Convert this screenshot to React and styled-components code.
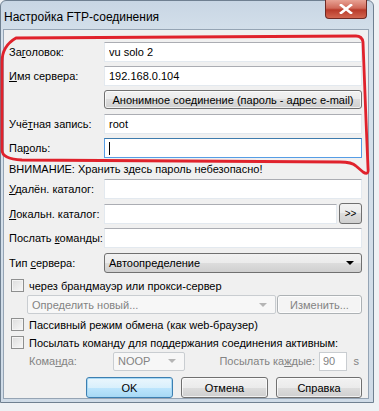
import React from "react";
import styled, { createGlobalStyle } from "styled-components";

const GlobalStyle = createGlobalStyle`
  html, body {
    margin: 0;
    padding: 0;
    background: #eef1f4;
  }
  body {
    font-family: "Liberation Sans", Arial, sans-serif;
    font-size: 11px;
    color: #000;
  }
`;

export default function App() {
  return (
    <>
      <GlobalStyle />
      <Window>
        <TitleBar>
          <Title>Настройка FTP-соединения</Title>
          <CloseBtn>
            <svg width="14" height="10" viewBox="0 0 14 10">
              <path
                d="M2 1 L12 9 M12 1 L2 9"
                stroke="#fff"
                strokeWidth="2.6"
                strokeLinecap="square"
              />
            </svg>
          </CloseBtn>
        </TitleBar>
        <Client>
          <Row>
            <Label>
              За<u>г</u>оловок:
            </Label>
            <Input defaultValue="vu solo 2" />
          </Row>
          <Row $mt={4}>
            <Label>
              <u>И</u>мя сервера:
            </Label>
            <Input defaultValue="192.168.0.104" />
          </Row>
          <Row $mt={4}>
            <span />
            <Button $h={19}>Анонимное соединение (пароль - адрес e-mail)</Button>
          </Row>
          <Row $mt={5}>
            <Label>
              Учё<u>т</u>ная запись:
            </Label>
            <Input defaultValue="root" />
          </Row>
          <Row $mt={4}>
            <Label>
              Па<u>р</u>оль:
            </Label>
            <Input $focus>
              <Caret />
            </Input>
          </Row>
          <Warning>ВНИМАНИЕ: Хранить здесь пароль небезопасно!</Warning>
          <Row $mt={2}>
            <Label>
              <u>У</u>далён. каталог:
            </Label>
            <Input />
          </Row>
          <Row $mt={4}>
            <Label>
              <u>Л</u>окальн. каталог:
            </Label>
            <InputWithBtn>
              <Input />
              <SmallBtn>&gt;&gt;</SmallBtn>
            </InputWithBtn>
          </Row>
          <Row $mt={4}>
            <Label>
              Послать <u>к</u>оманды:
            </Label>
            <Input />
          </Row>
          <Row $mt={5}>
            <Label>
              Тип <u>с</u>ервера:
            </Label>
            <DropButton>
              <span>Автоопределение</span>
              <Arrow />
            </DropButton>
          </Row>
          <CheckRow $mt={5}>
            <Box />
            <span>через брандмауэр или прокси-сервер</span>
          </CheckRow>
          <ProxyRow>
            <DisabledSelect $w={249}>
              <span>Определить новый...</span>
              <Arrow $disabled />
            </DisabledSelect>
            <Button $h={19} $disabled>
              Изменить...
            </Button>
          </ProxyRow>
          <CheckRow $mt={3}>
            <Box />
            <span>Пассивный режим обмена (как web-браузер)</span>
          </CheckRow>
          <CheckRow $mt={3}>
            <Box />
            <span>Посылать команду для поддержания соединения активным:</span>
          </CheckRow>
          <KeepRow>
            <Dim $w={84}>
              Кома<u>н</u>да:
            </Dim>
            <DisabledSelect $w={72}>
              <span>NOOP</span>
              <Arrow $disabled />
            </DisabledSelect>
            <Dim $w={134} $right>
              Посылать ка<u>ж</u>дые:
            </Dim>
            <SmallInput>90</SmallInput>
            <Dim $w={16} $right>
              s
            </Dim>
          </KeepRow>
          <Footer>
            <Button $h={21} $w={87} $default>
              OK
            </Button>
            <Button $h={21} $w={87}>
              Отмена
            </Button>
            <Button $h={21} $w={86}>
              Справка
            </Button>
          </Footer>
          <Scribble viewBox="0 0 379 411" width="379" height="411">
            <path
              d="M16 38 L356 36 Q362 36 363 42 L366 120 L368 168 Q369 176 363 172 L356 166 Q352 162 340 162 L22 160 Q2 159 2 150 L2 62 Q2 46 16 38 Z"
              fill="none"
              stroke="#e0222c"
              strokeWidth="2.8"
              strokeLinejoin="round"
            />
          </Scribble>
        </Client>
      </Window>
    </>
  );
}

const Window = styled.div`
  position: relative;
  width: 374px;
  height: 403px;
  background: linear-gradient(#c8d6e4, #d7e2ec 40px, #cfdbe7);
  border: 1px solid #6f8091;
  border-radius: 6px 6px 0 0;
  box-sizing: border-box;
  display: flex;
  flex-direction: column;
  padding: 0 4px 3px 2px;
`;

const TitleBar = styled.div`
  height: 29px;
  display: flex;
  align-items: flex-start;
  justify-content: space-between;
`;

const Title = styled.div`
  font-size: 12px;
  padding: 9px 0 0 1px;
  color: #000;
`;

const CloseBtn = styled.div`
  width: 42px;
  height: 19px;
  margin-top: -1px;
  margin-right: 2px;
  box-sizing: border-box;
  border: 1px solid #6e2a24;
  border-top: none;
  border-radius: 0 0 4px 4px;
  background: linear-gradient(#e8a294, #d06a5a 45%, #b83a2a 55%, #d26650);
  display: flex;
  align-items: center;
  justify-content: center;
`;

const Client = styled.div`
  flex: 1;
  background: #f0f0f0;
  border: 1px solid #95a4b4;
  padding: 12px 6px 0 5px;
  display: flex;
  flex-direction: column;
`;

const Row = styled.div`
  display: grid;
  grid-template-columns: 95px minmax(0, 1fr);
  align-items: center;
  margin-top: ${(p) => p.$mt || 0}px;
`;

const Label = styled.div`
  white-space: nowrap;
`;

const Input = styled.input.attrs((p) => ({ as: p.children ? "div" : "input" }))`
  height: 20px;
  box-sizing: border-box;
  width: 100%;
  min-width: 0;
  border: 1px solid ${(p) => (p.$focus ? "#569de5" : "#e3e9ef")};
  border-top-color: ${(p) => (p.$focus ? "#3d7bad" : "#abadb3")};
  background: #fff;
  font: inherit;
  padding: 0 4px;
  outline: none;
  display: flex;
  align-items: center;
`;

const Caret = styled.span`
  width: 1px;
  height: 13px;
  background: #000;
`;

const Button = styled.div`
  height: ${(p) => p.$h}px;
  ${(p) => (p.$w ? `width: ${p.$w}px;` : "")}
  box-sizing: border-box;
  border: 1px solid ${(p) => (p.$default ? "#3c7fb1" : p.$disabled ? "#adb2b5" : "#707070")};
  border-radius: 3px;
  background: ${(p) =>
    p.$default
      ? "linear-gradient(#eaf6fd, #d9f0fc 50%, #bee6fd 50%, #a7d9f5)"
      : p.$disabled
      ? "#f4f4f4"
      : "linear-gradient(#f2f2f2, #ebebeb 50%, #dddddd 50%, #cfcfcf)"};
  box-shadow: inset 0 0 0 1px ${(p) => (p.$default ? "#a8d8f4" : "rgba(255,255,255,0.7)")};
  color: ${(p) => (p.$disabled ? "#838383" : "#000")};
  display: flex;
  align-items: center;
  justify-content: center;
  white-space: nowrap;
`;

const Warning = styled.div`
  height: 16px;
  margin-top: 3px;
  display: flex;
  align-items: center;
`;

const InputWithBtn = styled.div`
  display: flex;
  align-items: center;
  gap: 2px;
`;

const SmallBtn = styled.div`
  width: 23px;
  height: 21px;
  flex: none;
  box-sizing: border-box;
  border: 1px solid #707070;
  border-radius: 3px;
  background: linear-gradient(#f2f2f2, #ebebeb 50%, #dddddd 50%, #cfcfcf);
  font-size: 10px;
  display: flex;
  align-items: center;
  justify-content: center;
`;

const DropButton = styled.div`
  height: 20px;
  box-sizing: border-box;
  border: 1px solid #707070;
  border-radius: 3px;
  background: linear-gradient(#f2f2f2, #ebebeb 50%, #dddddd 50%, #cfcfcf);
  display: flex;
  align-items: center;
  justify-content: space-between;
  padding: 0 7px 0 4px;
`;

const Arrow = styled.span`
  width: 0;
  height: 0;
  border-left: 4px solid transparent;
  border-right: 4px solid transparent;
  border-top: 4px solid ${(p) => (p.$disabled ? "#b5b5b5" : "#000")};
`;

const CheckRow = styled.div`
  height: 15px;
  margin-top: ${(p) => p.$mt || 0}px;
  display: flex;
  align-items: center;
  gap: 5px;
  padding-left: 2px;
`;

const Box = styled.span`
  width: 13px;
  height: 13px;
  flex: none;
  box-sizing: border-box;
  border: 1px solid #8e8f8f;
  background: linear-gradient(135deg, #dcdcdc, #f8f8f8);
  box-shadow: inset 0 0 0 1px #f4f4f4;
`;

const ProxyRow = styled.div`
  margin-top: 2px;
  padding-left: 18px;
  display: flex;
  align-items: center;
  justify-content: space-between;
  & > div:last-child {
    width: 85px;
  }
`;

const DisabledSelect = styled.div`
  width: ${(p) => p.$w}px;
  height: 19px;
  flex: none;
  box-sizing: border-box;
  border: 1px solid #c9cdd1;
  border-radius: 2px;
  background: #f7f7f7;
  color: #838383;
  display: flex;
  align-items: center;
  justify-content: space-between;
  padding: 0 8px 0 4px;
`;

const KeepRow = styled.div`
  margin-top: 1px;
  height: 20px;
  display: flex;
  align-items: center;
  padding-left: 20px;
`;

const Dim = styled.span`
  width: ${(p) => p.$w}px;
  flex: none;
  color: #838383;
  text-align: ${(p) => (p.$right ? "right" : "left")};
  padding-right: ${(p) => (p.$right ? 4 : 0)}px;
  box-sizing: border-box;
  white-space: nowrap;
`;

const SmallInput = styled.div`
  width: 28px;
  height: 19px;
  flex: none;
  box-sizing: border-box;
  border: 1px solid #c9cdd1;
  background: #fff;
  color: #838383;
  padding-left: 3px;
  display: flex;
  align-items: center;
`;

const Footer = styled.div`
  margin-top: 6px;
  display: flex;
  justify-content: flex-end;
  gap: 8px;
`;

const Scribble = styled.svg`
  position: absolute;
  left: -1px;
  top: -1px;
  pointer-events: none;
`;
